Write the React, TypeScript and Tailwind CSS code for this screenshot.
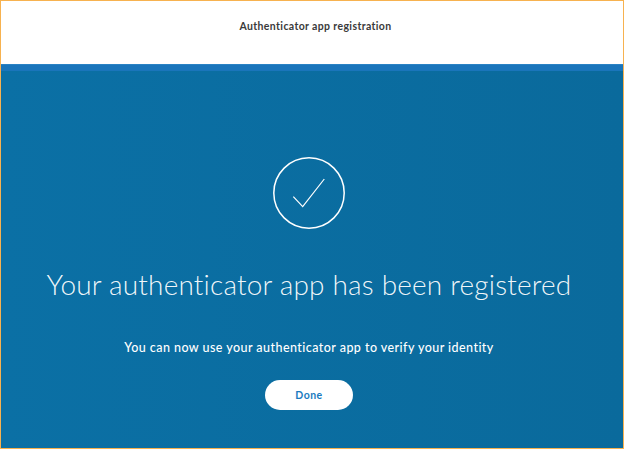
export default function App() {
  return (
    <div className="w-[624px] h-[449px] border border-[#f7b24f] flex flex-col overflow-hidden font-['Lato',sans-serif]">
      {/* Header */}
      <div className="h-[63px] bg-white flex justify-center pt-[18px] pl-[7px]">
        <h1 className="text-[10.5px] leading-[14px] font-bold tracking-[0.37px] text-[#3a3a3a] whitespace-nowrap">Authenticator app registration</h1>
      </div>
      <div className="h-[7px] bg-[#1a75bb] border-t border-[#2a82c4]" />

      {/* Confirmation */}
      <div className="flex-1 bg-gradient-to-r from-[#0b70a5] to-[#0a6a9c] flex flex-col items-center pt-[86px] pr-[6px]">
        <svg width="72" height="72" viewBox="0 0 72 72" fill="none" stroke="white">
          <circle cx="36" cy="36" r="35.2" strokeWidth="1.5" />
          <path d="M20.3 39.7 L29.7 49.7 L51.3 22" strokeWidth="1.2" />
        </svg>
        <h2 className="mt-[35px] text-[28px] leading-[40px] font-light text-white/95 tracking-[0.18px] whitespace-nowrap">
          Your authenticator app has been registered
        </h2>
        <p className="mt-[36px] text-[12.5px] leading-[16px] font-medium text-white tracking-[0.45px] whitespace-nowrap">
          You can now use your authenticator app to verify your identity
        </p>
        <button className="mt-[24px] w-[88px] h-[30px] pt-px rounded-full bg-white text-[#1a7bc0] text-[10.5px] font-bold tracking-[0.5px]">
          Done
        </button>
      </div>
    </div>
  );
}
